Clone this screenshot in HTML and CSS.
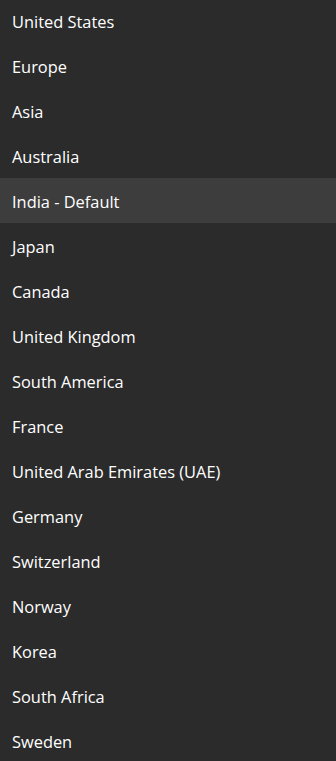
FILE: index.html
```html
<!DOCTYPE html>
<html>
<head>
<meta charset="utf-8">
<link rel="stylesheet" href="styles.css">
</head>
<body>
<ul class="list">
  <li class="item">United States</li>
  <li class="item">Europe</li>
  <li class="item">Asia</li>
  <li class="item">Australia</li>
  <li class="item selected">India - Default</li>
  <li class="item">Japan</li>
  <li class="item">Canada</li>
  <li class="item">United Kingdom</li>
  <li class="item">South America</li>
  <li class="item">France</li>
  <li class="item">United Arab Emirates (UAE)</li>
  <li class="item">Germany</li>
  <li class="item">Switzerland</li>
  <li class="item">Norway</li>
  <li class="item">Korea</li>
  <li class="item">South Africa</li>
  <li class="item">Sweden</li>
</ul>
</body>
</html>
```
FILE: styles.css
```css
html, body {
  margin: 0;
  padding: 0;
  background: #2b2b2b;
  overflow: hidden;
  height: 100%;
}
.list {
  list-style: none;
  margin: -2px 0 0 0;
  padding: 0;
  font-family: "Open Sans", "Noto Sans", sans-serif;
  font-size: 16.4px;
  color: #ffffff;
}
.item {
  box-sizing: border-box;
  height: 45px;
  display: flex;
  align-items: center;
  padding: 1px 0 0 12px;
}
.item.selected {
  background: #3d3d3d;
}
```
